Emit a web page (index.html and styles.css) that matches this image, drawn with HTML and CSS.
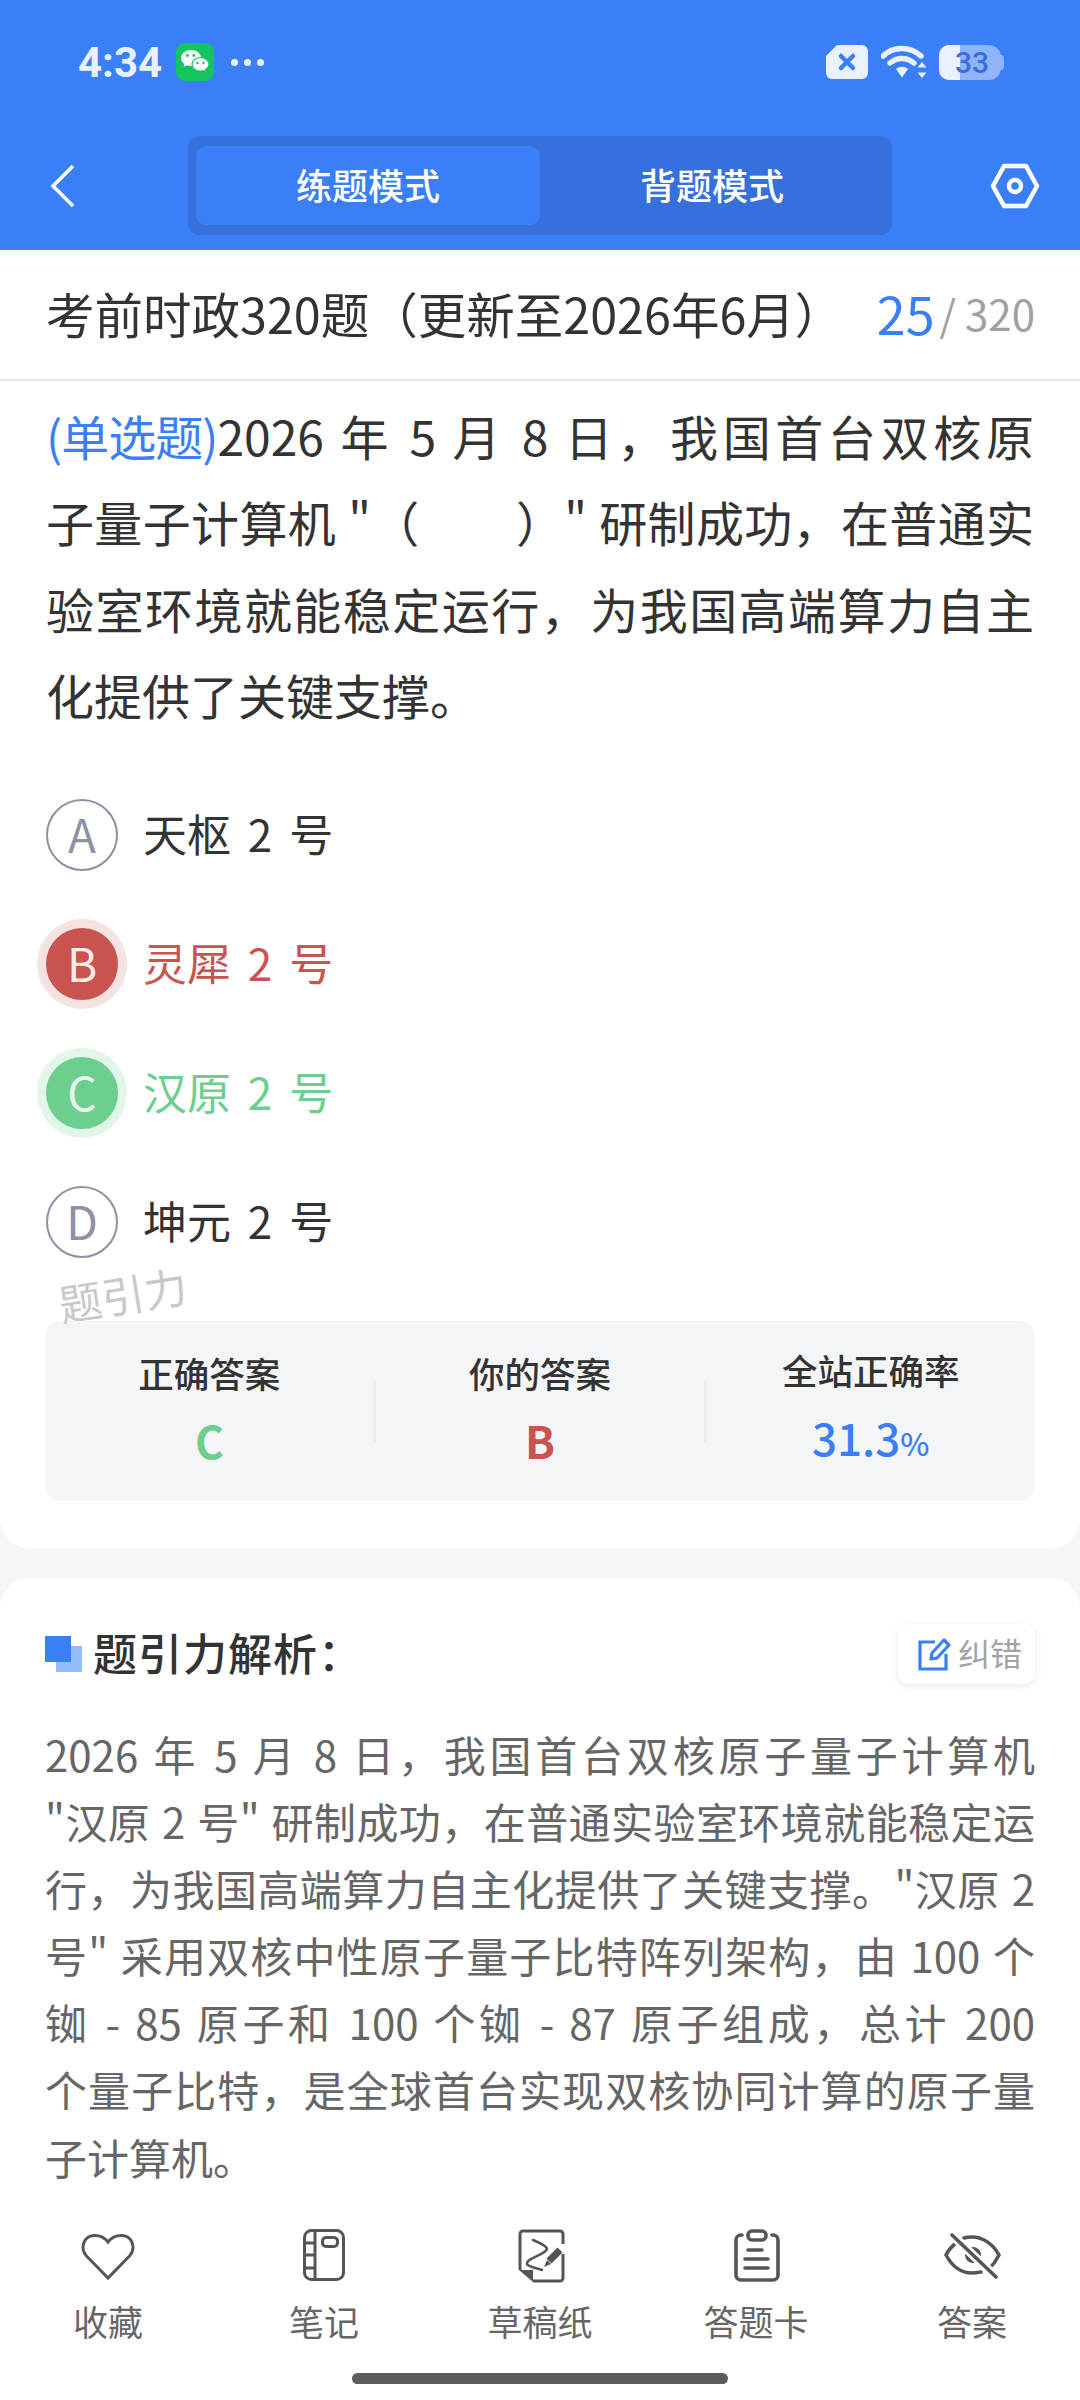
FILE: index.html
```html
<!DOCTYPE html>
<html lang="zh-CN">
<head>
  <meta charset="UTF-8">
  <meta name="viewport" content="width=device-width, initial-scale=1.0">
  <title>考前时政320题</title>
  <link rel="stylesheet" href="styles.css">
</head>
<body>
  <header class="top">
    <div class="status">
      <div class="status-left">
        <span class="time">4:34</span>
        <svg class="wechat" width="38" height="38" viewBox="0 0 38 38">
          <rect width="38" height="38" rx="9" fill="#14c45f"/>
          <path d="M15 7c-5.500 0-10 3.500-10 8 0 2.500 1.300 4.500 3.400 6l-.8 3 3.400-1.700c1.300.4 2.600.6 4 .6 5.500 0 10-3.400 10-7.900S20.500 7 15 7z" fill="#fff"/>
          <path d="M24.500 14.500c-4.700 0-8.500 3-8.500 6.800s3.800 6.800 8.500 6.800c1 0 2-.1 2.900-.4l2.800 1.500-.6-2.600c2.100-1.300 3.400-3.200 3.400-5.300 0-3.800-3.800-6.800-8.500-6.800z" fill="#fff" stroke="#14c45f" stroke-width="1.200"/>
          <circle cx="11.500" cy="12.500" r="1.400" fill="#14c45f"/>
          <circle cx="18" cy="12.500" r="1.400" fill="#14c45f"/>
          <circle cx="21.500" cy="20" r="1.200" fill="#14c45f"/>
          <circle cx="27.500" cy="20" r="1.200" fill="#14c45f"/>
        </svg>
        <span class="dots"><i></i><i></i><i></i></span>
      </div>
      <div class="status-right">
        <svg width="44" height="36" viewBox="0 0 44 36">
          <path d="M12 1H37a6 6 0 0 1 6 6V29a6 6 0 0 1-6 6H7a6 6 0 0 1-6-6V12z" fill="#eaf1fe"/>
          <path d="M16 12l12 12M28 12L16 24" stroke="#3b7ff7" stroke-width="4.500" stroke-linecap="round"/>
        </svg>
        <svg class="wifi" width="46" height="34" viewBox="0 0 46 34">
          <path d="M2 11C12 1 29 1 40 11M9 18c7-6 17-6 24 0" fill="none" stroke="#eaf1fe" stroke-width="5.500" stroke-linecap="round"/>
          <path d="M15 24c3.500-3 8.500-3 12 0l-6 8.500z" fill="#eaf1fe"/>
          <path d="M41 17l4.500 5.500h-9zM41 33l-4.500-5.500h9z" fill="#eaf1fe"/>
        </svg>
        <div class="battery">
          <span class="battery-fill"></span>
          <span class="battery-num">33</span>
          <span class="battery-nub"></span>
        </div>
      </div>
    </div>
    <nav class="nav">
      <svg class="back" width="26" height="44" viewBox="0 0 26 44">
        <path d="M23 2L3 22l20 20" fill="none" stroke="#fff" stroke-width="3.500"/>
      </svg>
      <div class="seg">
        <div class="seg-item seg-on">练题模式</div>
        <div class="seg-item">背题模式</div>
      </div>
      <svg class="gear" width="50" height="46" viewBox="0 0 50 46">
        <path d="M14 3H36L47 23 36 43H14L3 23z" fill="none" stroke="#fff" stroke-width="4.500" stroke-linejoin="round"/>
        <circle cx="25" cy="23" r="6" fill="none" stroke="#fff" stroke-width="4.500"/>
      </svg>
    </nav>
  </header>

  <main class="content">
    <section class="panel panel-q">
      <div class="paper">
        <h1 class="paper-name">考前时政320题（更新至2026年6月）</h1>
        <div class="count"><b>25</b><i>/</i><span>320</span></div>
      </div>
      <div class="question">
        <p class="ln"><span class="q-type">(单选题)</span>2026 年 5 月 8 日，我国首台双核原</p>
        <p class="ln">子量子计算机 "（&emsp;&emsp;）" 研制成功，在普通实</p>
        <p class="ln">验室环境就能稳定运行，为我国高端算力自主</p>
        <p class="ln ln-end">化提供了关键支撑。</p>
      </div>
      <ul class="options">
        <li class="option"><span class="letter">A</span><span class="opt-text">天枢 2 号</span></li>
        <li class="option wrong"><span class="letter">B</span><span class="opt-text">灵犀 2 号</span></li>
        <li class="option right"><span class="letter">C</span><span class="opt-text">汉原 2 号</span></li>
        <li class="option"><span class="letter">D</span><span class="opt-text">坤元 2 号</span></li>
      </ul>
      <div class="watermark">题引力</div>
      <div class="stats">
        <div class="stat">
          <div class="stat-label">正确答案</div>
          <div class="stat-val green">C</div>
        </div>
        <div class="stat-line"></div>
        <div class="stat">
          <div class="stat-label">你的答案</div>
          <div class="stat-val red">B</div>
        </div>
        <div class="stat-line"></div>
        <div class="stat">
          <div class="stat-label">全站正确率</div>
          <div class="stat-val blue">31.3<small>%</small></div>
        </div>
      </div>
    </section>

    <section class="panel panel-a">
      <div class="a-head">
        <h2 class="a-title"><span class="squares"><i></i><i></i></span><span class="a-text">题引力解析：</span></h2>
        <div class="fix">
          <svg width="33" height="34" viewBox="0 0 33 34">
            <path d="M17 5H2v27h26V17" fill="none" stroke="#3b7ff5" stroke-width="3.200"/>
            <path d="M13 22l1-6L26 3l5 5-12 13z" fill="none" stroke="#3b7ff5" stroke-width="3.200" stroke-linejoin="round"/>
          </svg>
          <span>纠错</span>
        </div>
      </div>
      <div class="analysis">
        <p class="ln">2026 年 5 月 8 日，我国首台双核原子量子计算机</p>
        <p class="ln">"汉原 2 号" 研制成功，在普通实验室环境就能稳定运</p>
        <p class="ln">行，为我国高端算力自主化提供了关键支撑。"汉原 2</p>
        <p class="ln">号" 采用双核中性原子量子比特阵列架构，由 100 个</p>
        <p class="ln">铷 - 85 原子和 100 个铷 - 87 原子组成，总计 200</p>
        <p class="ln">个量子比特，是全球首台实现双核协同计算的原子量</p>
        <p class="ln ln-end">子计算机。</p>
      </div>
    </section>
  </main>

  <footer class="bar">
    <div class="tabs">
      <div class="tab">
        <svg width="60" height="56" viewBox="0 0 60 56">
          <path d="M30 50L8.500 28C2 21 5 8 16 7.500 22 7.300 27 10 30 14 33 10 38 7.300 44 7.500 55 8 58 21 51.500 28z" class="ic"/>
        </svg>
        <span>收藏</span>
      </div>
      <div class="tab">
        <svg width="60" height="56" viewBox="0 0 60 56">
          <rect x="10.500" y="2.500" width="39" height="49" rx="7" class="ic"/>
          <path d="M21 2.500v49M10.500 15H21M10.500 27H21M10.500 40H21" class="ic"/>
          <rect x="28.500" y="9.500" width="15" height="9" rx="3.500" class="ic"/>
        </svg>
        <span>笔记</span>
      </div>
      <div class="tab">
        <svg width="60" height="56" viewBox="0 0 60 56">
          <path d="M10 42V6a3 3 0 0 1 3-3H50a3 3 0 0 1 3 3V16M53 26V50a3 3 0 0 1-3 3H23" class="ic"/>
          <path d="M9 42H23V54z" fill="#555"/>
          <path d="M23 12C30 15 37 18 37 21 35 27 16 30 17 36 18 39 27 40 32 42" fill="none" stroke="#555" stroke-width="2.500" stroke-linecap="round"/>
          <path d="M50 22L39 33" stroke="#555" stroke-width="7"/>
          <path d="M37 32l4 4-7 3z" fill="#555"/>
        </svg>
        <span>草稿纸</span>
      </div>
      <div class="tab">
        <svg width="60" height="56" viewBox="0 0 60 56">
          <path d="M16 7H15a5 5 0 0 0-5 5V47a5 5 0 0 0 5 5H47a5 5 0 0 0 5-5V12a5 5 0 0 0-5-5H46" class="ic ic-b"/>
          <rect x="22" y="3" width="18" height="9" rx="4" class="ic ic-b"/>
          <path d="M22 22H36M19 31H42M19 40H42" class="ic ic-b"/>
        </svg>
        <span>答题卡</span>
      </div>
      <div class="tab">
        <svg width="60" height="56" viewBox="0 0 60 56">
          <path d="M14 15C9 19 6 23 4 27 10 38 19 45 30 45 33 45 36 44.500 39 44" class="ic ic-b"/>
          <path d="M22 10C25 9 27 9 30 9 41 9 51 16 57 27 54 33 51 37 47 41" class="ic ic-b"/>
          <circle cx="31" cy="27" r="8" fill="#555"/>
          <path d="M10 7L54 49" stroke="#fff" stroke-width="9"/>
          <path d="M10 7L54 49" class="ic ic-b"/>
        </svg>
        <span>答案</span>
      </div>
    </div>
    <div class="home"></div>
  </footer>
</body>
</html>
```

FILE: styles.css
```css
* {
  box-sizing: border-box;
}

html, body {
  margin: 0;
  padding: 0;
}

body {
  width: 1080px;
  height: 2400px;
  display: flex;
  flex-direction: column;
  overflow: hidden;
  font-family: "Noto Sans CJK SC", "Noto Sans", sans-serif;
  color: #333;
  background: #fff;
}

/* blue top */
.top {
  height: 250px;
  background: #3b7ff7;
}

.status {
  height: 136px;
  padding: 0 76px 12px 78px;
  display: flex;
  justify-content: space-between;
  align-items: center;
  color: #eaf1fe;
}

.status-left, .status-right {
  display: flex;
  align-items: center;
}

.time {
  font-family: Roboto, sans-serif;
  font-size: 42px;
  font-weight: 700;
  width: 98px;
}

.dots {
  display: flex;
  gap: 6px;
  margin-left: 17px;
}

.dots i {
  width: 7px;
  height: 7px;
  border-radius: 50%;
  background: #eaf1fe;
}

.wifi {
  margin-left: 12px;
}

.battery {
  position: relative;
  width: 62px;
  height: 35px;
  margin: 0 3px 0 12px;
  border-radius: 10px 12px 12px 10px;
  background: #8fb4fa;
}

.battery-fill {
  display: block;
  width: 21px;
  height: 100%;
  border-radius: 10px 0 0 10px;
  background: #eaf1fe;
}

.battery-num {
  position: absolute;
  left: 16px;
  top: 0;
  font-family: Roboto, sans-serif;
  font-size: 30px;
  line-height: 35px;
  font-weight: 500;
  color: #3a6fd8;
}

.battery-nub {
  position: absolute;
  right: -3px;
  top: 10px;
  width: 3px;
  height: 15px;
  border-radius: 0 3px 3px 0;
  background: #8fb4fa;
}

.nav {
  height: 99px;
  padding: 0 40px 0 50px;
  display: flex;
  align-items: center;
}

.back {
  margin-right: 112px;
}

.gear {
  margin-left: auto;
}

.seg {
  width: 704px;
  height: 99px;
  padding: 10px 8px;
  display: flex;
  background: #3670dc;
  border-radius: 12px;
}

.seg-item {
  flex: 1;
  padding-bottom: 4px;
  font-size: 36px;
  font-weight: 500;
  color: #fff;
  display: flex;
  align-items: center;
  justify-content: center;
  border-radius: 10px;
}

.seg-on {
  background: #3b7ff7;
}

/* main area */
.content {
  flex: 1;
  min-height: 0;
  background: #f5f6f8;
  display: flex;
  flex-direction: column;
  gap: 30px;
}

.panel {
  background: #fff;
}

.panel-q {
  position: relative;
  height: 1298px;
  border-radius: 0 0 30px 30px;
}

.paper {
  height: 131px;
  padding: 0 45px 0 46px;
  display: flex;
  align-items: center;
  justify-content: space-between;
  border-bottom: 2px solid #e5e5e5;
}

.paper-name {
  margin: 0 0 4px;
  font-size: 48.500px;
  font-weight: 400;
  color: #333;
  white-space: nowrap;
}

.count {
  display: flex;
  align-items: center;
  margin-bottom: 4px;
  color: #a0a0a0;
  font-size: 42px;
}

.count b {
  font-weight: 400;
  font-size: 52px;
  color: #3b7ff5;
}

.count i {
  font-style: normal;
  margin: 0 9px 0 5px;
}

/* lines break where the app breaks them, each one filled to the edge */
.ln {
  margin: 0;
  text-align: justify;
  text-align-last: justify;
}

.ln-end {
  text-align-last: left;
}

.question {
  margin: 11px 46px 0;
  font-size: 48px;
  line-height: 86.300px;
  word-spacing: 1px;
}

.q-type {
  display: inline-block;
  color: #3b7ff5;
  letter-spacing: -1px;
}

.options {
  list-style: none;
  margin: 62px 0 0;
  padding: 0 46px;
  display: flex;
  flex-direction: column;
  gap: 57px;
}

.option {
  height: 72px;
  display: flex;
  align-items: center;
  gap: 25px;
  font-size: 44px;
  word-spacing: 7px;
  white-space: pre;
}

.opt-text {
  margin-bottom: 5px;
}

.letter {
  width: 72px;
  height: 72px;
  padding-bottom: 4px;
  border: 2px solid #8e90a6;
  border-radius: 50%;
  display: flex;
  align-items: center;
  justify-content: center;
  font-size: 46px;
  font-weight: 400;
  color: #8e90a6;
}

.wrong {
  color: #c9544f;
}

.wrong .letter {
  background: #c9544f;
  border-color: #c9544f;
  color: #fbeaea;
  box-shadow: 0 0 0 9px #f5e3e3;
}

.right {
  color: #6ccf8d;
}

.right .letter {
  background: #6ccf8d;
  border-color: #6ccf8d;
  color: #e8f8ee;
  box-shadow: 0 0 0 9px #e3f6ea;
}

.watermark {
  position: absolute;
  left: 58px;
  top: 1014px;
  font-size: 43px;
  line-height: 58px;
  color: #c9c9c9;
  transform: rotate(-9deg);
}

.stats {
  margin: 63px 45px 0;
  height: 180px;
  background: #f4f5f7;
  border-radius: 16px;
  display: flex;
  align-items: center;
}

.stat {
  flex: 1;
  text-align: center;
  padding-bottom: 5px;
}

.stat-line {
  width: 2px;
  height: 62px;
  background: #ebedf0;
}

.stat-label {
  font-size: 35.500px;
  line-height: 46px;
  font-weight: 500;
}

.stat-val {
  margin-top: 16px;
  font-size: 44px;
  line-height: 56px;
  font-weight: 600;
}

.stat-val small {
  font-size: 31px;
}

.green {
  color: #6ccf8d;
}

.red {
  color: #c9544f;
}

.blue {
  color: #3b7ff5;
  font-weight: 500;
}

.panel-a {
  flex: 1;
  min-height: 0;
  padding: 46px 45px 0;
  border-radius: 30px 30px 0 0;
}

.a-head {
  height: 60px;
  display: flex;
  align-items: center;
  justify-content: space-between;
}

.a-title {
  margin: 0;
  display: flex;
  align-items: center;
  font-size: 44px;
  font-weight: 500;
  letter-spacing: 1px;
}

.a-text {
  margin-bottom: 5px;
}

.squares {
  position: relative;
  width: 37px;
  height: 36px;
  margin-right: 11px;
}

.squares i {
  position: absolute;
  width: 26px;
  height: 26px;
}

.squares i:first-child {
  left: 11px;
  top: 10px;
  background: #94bbfb;
}

.squares i:last-child {
  left: 0;
  top: 0;
  background: #3b7ff5;
}

.fix {
  width: 137px;
  height: 60px;
  padding-left: 20px;
  display: flex;
  align-items: center;
  gap: 7px;
  font-size: 32px;
  color: #a3a3a3;
  background: #fff;
  border-radius: 12px;
  box-shadow: 0 2px 10px rgba(0, 0, 0, 0.09);
}

.fix span {
  margin-bottom: 5px;
}

.analysis {
  margin: 36px 0 0;
  font-size: 42px;
  line-height: 67.100px;
  word-spacing: 2px;
  color: #666;
}

/* bottom bar */
.bar {
  height: 210px;
  padding-top: 38px;
  background: #fff;
  position: relative;
}

.tabs {
  display: flex;
}

.tab {
  flex: 1;
  display: flex;
  flex-direction: column;
  align-items: center;
  font-size: 35px;
  line-height: 46px;
  color: #666;
}

.tab svg {
  margin-bottom: 14px;
}

.ic {
  fill: none;
  stroke: #555;
  stroke-width: 3;
}

.ic-b {
  stroke-width: 3.600;
  stroke-linecap: round;
}

.home {
  width: 376px;
  height: 11px;
  margin: 29px auto 0;
  border-radius: 6px;
  background: #5c5c5c;
}
```
